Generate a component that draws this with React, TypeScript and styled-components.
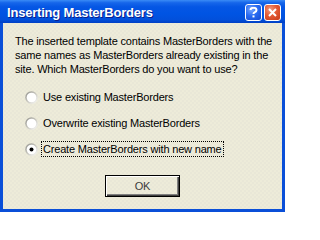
import React from "react";
import styled, { createGlobalStyle } from "styled-components";

const Global = createGlobalStyle`
  html, body { margin: 0; padding: 0; background: #ffffff; }
  body { font-family: Tahoma, "Liberation Sans", "DejaVu Sans", sans-serif; }
`;

const Window = styled.div`
  width: 285px;
  height: 212px;
  display: flex;
  flex-direction: column;
  background: #0a4fd8;
  overflow: hidden;
`;

const TitleBar = styled.div`
  height: 23px;
  flex: none;
  display: flex;
  align-items: center;
  padding: 0 4px 0 7px;
  background: linear-gradient(
    to bottom,
    #3a8bf6 0%,
    #1666ea 12%,
    #0556e4 30%,
    #0054e3 60%,
    #0250db 85%,
    #003fc4 100%
  );
`;

const Title = styled.div`
  flex: 1;
  color: #ffffff;
  font-family: "Liberation Sans", "DejaVu Sans", sans-serif;
  font-weight: bold;
  font-size: 13px;
  letter-spacing: -0.2px;
  text-shadow: 1px 1px 0 #0a1e8c;
  white-space: nowrap;
  padding-top: 1px;
`;

const Buttons = styled.div`
  display: flex;
  gap: 2px;
  padding-top: 2px;
`;

const CapButton = styled.div<{ $red?: boolean }>`
  width: 17px;
  height: 17px;
  box-sizing: border-box;
  border: 1px solid #ffffff;
  border-radius: 3px;
  display: flex;
  align-items: center;
  justify-content: center;
  color: #ffffff;
  background: ${(p) =>
    p.$red
      ? "radial-gradient(circle at 35% 30%, #f59a7e 0%, #e35a34 45%, #c83a18 100%)"
      : "radial-gradient(circle at 35% 30%, #7aa9ff 0%, #2a6cf2 45%, #1549d0 100%)"};
`;

const Client = styled.div`
  flex: 1;
  margin: 0 3px 3px 3px;
  background-color: #e9e7d7;
  background-image: radial-gradient(circle, #f6f6df 0.5px, transparent 0.8px),
    radial-gradient(circle, #f6f6df 0.5px, transparent 0.8px);
  background-size: 4px 4px, 4px 4px;
  background-position: 0 0, 2px 2px;
  display: flex;
  flex-direction: column;
  padding: 11px 10px 12px 12px;
  font-family: "Liberation Sans", "DejaVu Sans", sans-serif;
  font-size: 11px;
  letter-spacing: -0.18px;
  color: #000000;
`;

const Message = styled.p`
  margin: 0;
  line-height: 14px;
  height: 42px;
  white-space: nowrap;
`;

const RadioList = styled.div`
  margin: 13px 0 0 10px;
  display: flex;
  flex-direction: column;
  gap: 10px;
`;

const Row = styled.div`
  height: 16px;
  display: flex;
  align-items: center;
  gap: 3px;
`;

const Label = styled.span<{ $focused?: boolean }>`
  box-sizing: border-box;
  height: 16px;
  line-height: 14px;
  padding: 0 1px;
  border: 1px dotted ${(p) => (p.$focused ? "#000000" : "transparent")};
  white-space: nowrap;
`;

const ButtonBar = styled.div`
  margin-top: 18px;
  display: flex;
  justify-content: center;
  padding-right: 2px;
`;

const OkButton = styled.div`
  width: 75px;
  height: 22px;
  box-sizing: border-box;
  border: 1px solid #000000;
  box-shadow: inset 1px 1px 0 #ffffff, inset -1px -1px 0 #404040,
    inset -2px -2px 0 #808080;
  display: flex;
  align-items: center;
  justify-content: center;
  color: #3c3c3c;
  font-size: 11px;
`;

const Radio: React.FC<{ checked?: boolean }> = ({ checked }) => (
  <svg width="13" height="13" viewBox="0 0 13 13">
    <defs>
      <linearGradient id={`rg${checked ? 1 : 0}`} x1="0" y1="0" x2="1" y2="1">
        <stop offset="0" stopColor="#8c8c88" />
        <stop offset="0.5" stopColor="#c9c8c0" />
        <stop offset="1" stopColor="#ffffff" />
      </linearGradient>
    </defs>
    <circle cx="6.5" cy="6.5" r="6.3" fill={`url(#rg${checked ? 1 : 0})`} />
    <circle cx="6.5" cy="6.5" r="4.8" fill="#ffffff" />
    {checked && <circle cx="6.5" cy="6.5" r="2" fill="#000000" />}
  </svg>
);

export default function App() {
  return (
    <>
      <Global />
      <Window>
        <TitleBar>
          <Title>Inserting MasterBorders</Title>
          <Buttons>
            <CapButton>
              <svg width="9" height="11" viewBox="0 0 9 11">
                <path
                  d="M1.5 3 Q1.5 0.8 4.5 0.8 Q7.5 0.8 7.5 3 Q7.5 4.5 5.6 5.3 Q4.5 5.8 4.5 7"
                  stroke="#fff"
                  strokeWidth="2"
                  fill="none"
                />
                <rect x="3.5" y="8.4" width="2" height="2" fill="#fff" />
              </svg>
            </CapButton>
            <CapButton $red>
              <svg width="9" height="9" viewBox="0 0 9 9">
                <path d="M1 1 L8 8 M8 1 L1 8" stroke="#fff" strokeWidth="2" />
              </svg>
            </CapButton>
          </Buttons>
        </TitleBar>
        <Client>
          <Message>
            The inserted template contains MasterBorders with the
            <br />
            same names as MasterBorders already existing in the
            <br />
            site. Which MasterBorders do you want to use?
          </Message>
          <RadioList>
            <Row>
              <Radio />
              <Label>Use existing MasterBorders</Label>
            </Row>
            <Row>
              <Radio />
              <Label>Overwrite existing MasterBorders</Label>
            </Row>
            <Row>
              <Radio checked />
              <Label $focused>Create MasterBorders with new name</Label>
            </Row>
          </RadioList>
          <ButtonBar>
            <OkButton>OK</OkButton>
          </ButtonBar>
        </Client>
      </Window>
    </>
  );
}
